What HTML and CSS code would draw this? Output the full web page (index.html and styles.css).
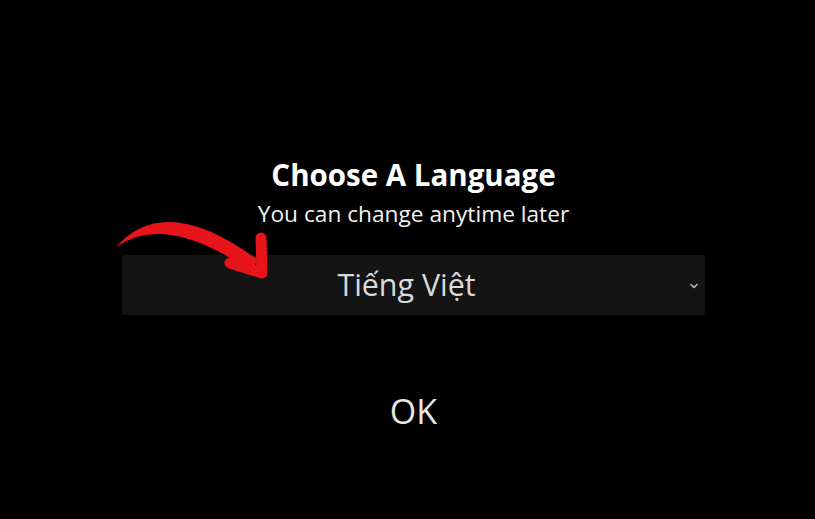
FILE: index.html
```html
<!DOCTYPE html>
<html lang="en">
<head>
<meta charset="utf-8">
<title>Choose A Language</title>
<link rel="stylesheet" href="styles.css">
</head>
<body>
<main class="screen">
  <section class="panel">
    <h1 class="title">Choose A Language</h1>
    <p class="subtitle">You can change anytime later</p>
    <div class="select-wrap">
      <div class="select">
        <span class="select-value">Tiếng Việt</span>
        <svg class="chevron" width="8" height="6" viewBox="0 0 8 6"><path d="M1 1.5 L4 4.5 L7 1.5" fill="none" stroke="#b8b8b8" stroke-width="1.6" stroke-linecap="round" stroke-linejoin="round"/></svg>
      </div>
      <svg class="arrow" width="170" height="80" viewBox="110 210 170 80">
        <path d="M116 247 Q165 191 258 260 L251 271 Q165 212 116 247 Z" fill="#e8141b"/>
        <polyline points="230,263 262,273 261,238" fill="none" stroke="#e8141b" stroke-width="11" stroke-linecap="round" stroke-linejoin="round"/>
      </svg>
    </div>
    <button class="ok">OK</button>
  </section>
</main>
</body>
</html>
```

FILE: styles.css
```css
html, body {
  margin: 0;
  padding: 0;
  background: #000;
}
.screen {
  width: 815px;
  height: 519px;
  background: #000;
  font-family: "Open Sans", "Noto Sans", sans-serif;
  overflow: hidden;
}
.panel {
  width: 583px;
  margin-left: 122px;
  padding-top: 157px;
  display: flex;
  flex-direction: column;
  align-items: center;
}
.title {
  margin: 0;
  font-size: 29.5px;
  line-height: 36px;
  font-weight: 700;
  color: #fff;
}
.subtitle {
  margin: 7px 0 0;
  font-size: 22.7px;
  line-height: 28px;
  color: #f2f2f2;
}
.select-wrap {
  position: relative;
  width: 100%;
  margin-top: 27px;
}
.select {
  height: 60px;
  background: #141414;
  border-radius: 3px;
  display: flex;
  justify-content: center;
  padding-right: 14px;
  position: relative;
}
.select-value {
  font-size: 30.4px;
  line-height: 60px;
  color: #dadada;
}
.chevron {
  position: absolute;
  right: 7px;
  top: 28px;
}
.arrow {
  position: absolute;
  left: -12px;
  top: -45px;
}
.ok {
  margin-top: 76px;
  background: none;
  border: none;
  padding: 0;
  font-family: inherit;
  font-size: 34px;
  line-height: 40px;
  color: #e6e6e6;
}
```
